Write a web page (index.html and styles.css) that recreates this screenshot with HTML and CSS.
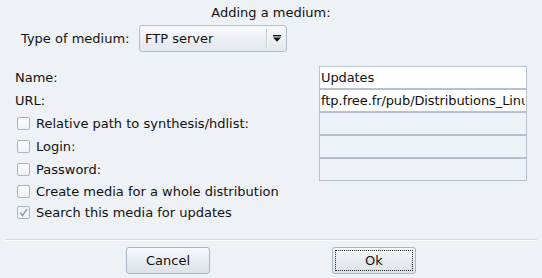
FILE: index.html
```html
<!DOCTYPE html>
<html lang="en">
<head>
    <meta charset="UTF-8">
    <title>Adding a medium</title>
    <link rel="stylesheet" href="styles.css">
</head>
<body>
    <div class="dialog">
        <div class="title">Adding a medium:</div>
        <div class="type-row">
            <span class="type-label">Type of medium:</span>
            <div class="combo">
                <span class="combo-text">FTP server</span>
                <span class="combo-sep"></span>
                <span class="combo-arrow">
                    <svg width="8" height="7" viewBox="0 0 8 7">
                        <rect x="0" y="0" width="8" height="1.4" fill="#111"/>
                        <polygon points="0,2.5 8,2.5 4,6.8" fill="#111"/>
                    </svg>
                </span>
            </div>
        </div>
        <div class="form">
            <div class="row">
                <span class="label">Name:</span>
                <input class="field" type="text" value="Updates">
            </div>
            <div class="row">
                <span class="label">URL:</span>
                <input class="field" type="text" value="ftp.free.fr/pub/Distributions_Linux/Mandrakelinux/official/updates">
            </div>
            <div class="row">
                <span class="label"><span class="check"></span>Relative path to synthesis/hdlist:</span>
                <input class="field" type="text" disabled>
            </div>
            <div class="row">
                <span class="label"><span class="check"></span>Login:</span>
                <input class="field" type="text" disabled>
            </div>
            <div class="row">
                <span class="label"><span class="check"></span>Password:</span>
                <input class="field" type="password" disabled>
            </div>
            <div class="row short">
                <span class="label"><span class="check"></span>Create media for a whole distribution</span>
            </div>
            <div class="row short">
                <span class="label"><span class="check checked">
                    <svg width="11" height="11" viewBox="0 0 11 11">
                        <polyline points="2,5.5 4.5,8.5 9,2" fill="none" stroke="#8e99a7" stroke-width="1.4"/>
                    </svg>
                </span>Search this media for updates</span>
            </div>
        </div>
        <div class="separator"></div>
        <div class="buttons">
            <button class="btn">Cancel</button>
            <button class="btn focus"><span class="focus-ring">Ok</span></button>
        </div>
    </div>
</body>
</html>
```

FILE: styles.css
```css
body {
    margin: 0;
    background: #eef1f6;
    font-family: 'DejaVu Sans', 'Liberation Sans', sans-serif;
    font-size: 13px;
    color: #111;
}
.dialog {
    width: 542px;
    height: 278px;
    display: flex;
    flex-direction: column;
}
.title {
    text-align: center;
    line-height: 16px;
    padding-top: 5px;
}
.type-row {
    display: flex;
    align-items: center;
    margin-top: 4px;
    padding-left: 21px;
}
.type-label {
    width: 118px;
}
.combo {
    width: 146px;
    height: 25px;
    border: 1px solid #b3bdc9;
    border-radius: 3px;
    background: linear-gradient(#f8f9fb, #e2e7ee);
    display: flex;
    align-items: center;
}
.combo-text {
    flex: 1;
    padding-left: 5px;
}
.combo-sep {
    width: 1px;
    height: 19px;
    background: #c4ccd6;
    border-right: 1px solid #fbfcfd;
}
.combo-arrow {
    width: 18px;
    display: flex;
    justify-content: center;
    align-items: center;
    padding-bottom: 1px;
}
.form {
    margin-top: 14px;
    padding: 0 15px 0 15px;
    display: flex;
    flex-direction: column;
}
.row {
    display: flex;
    align-items: center;
    justify-content: space-between;
    height: 23px;
}
.row.short {
    height: 21px;
}
.label {
    display: flex;
    align-items: center;
}
.check {
    width: 11px;
    height: 11px;
    border: 1px solid #aab4c1;
    border-radius: 2px;
    background: linear-gradient(#ffffff, #eef1f5);
    margin: 0 6px 0 2px;
    display: flex;
}
.check.checked {
    background: #f3f5f8;
}
.field {
    box-sizing: border-box;
    width: 208px;
    height: 23px;
    margin: 0;
    border: 1px solid #b8c2ce;
    padding: 0 1px;
    background: #fff;
    font-family: 'DejaVu Sans', 'Liberation Sans', sans-serif;
    font-size: 13px;
    letter-spacing: -0.1px;
    color: #111;
    outline: none;
}
.field:disabled {
    background: #eef1f6;
    border-color: #b6c0cc;
}
.separator {
    margin: 16px 5px 0 5px;
    height: 1px;
    background: #d3d9e0;
    border-bottom: 1px solid #fbfcfd;
}
.buttons {
    display: flex;
    justify-content: center;
    gap: 122px;
    margin-top: 6px;
}
.btn {
    box-sizing: border-box;
    width: 84px;
    height: 27px;
    border: 1px solid #a9b5c3;
    border-radius: 3px;
    background: linear-gradient(#f7f8fa, #dce2e9);
    font-family: 'DejaVu Sans', 'Liberation Sans', sans-serif;
    font-size: 13px;
    color: #111;
    padding: 0;
}
.btn.focus {
    padding: 2px;
    display: flex;
}
.focus-ring {
    flex: 1;
    border: 1px dotted #222;
    display: flex;
    align-items: center;
    justify-content: center;
}
```
